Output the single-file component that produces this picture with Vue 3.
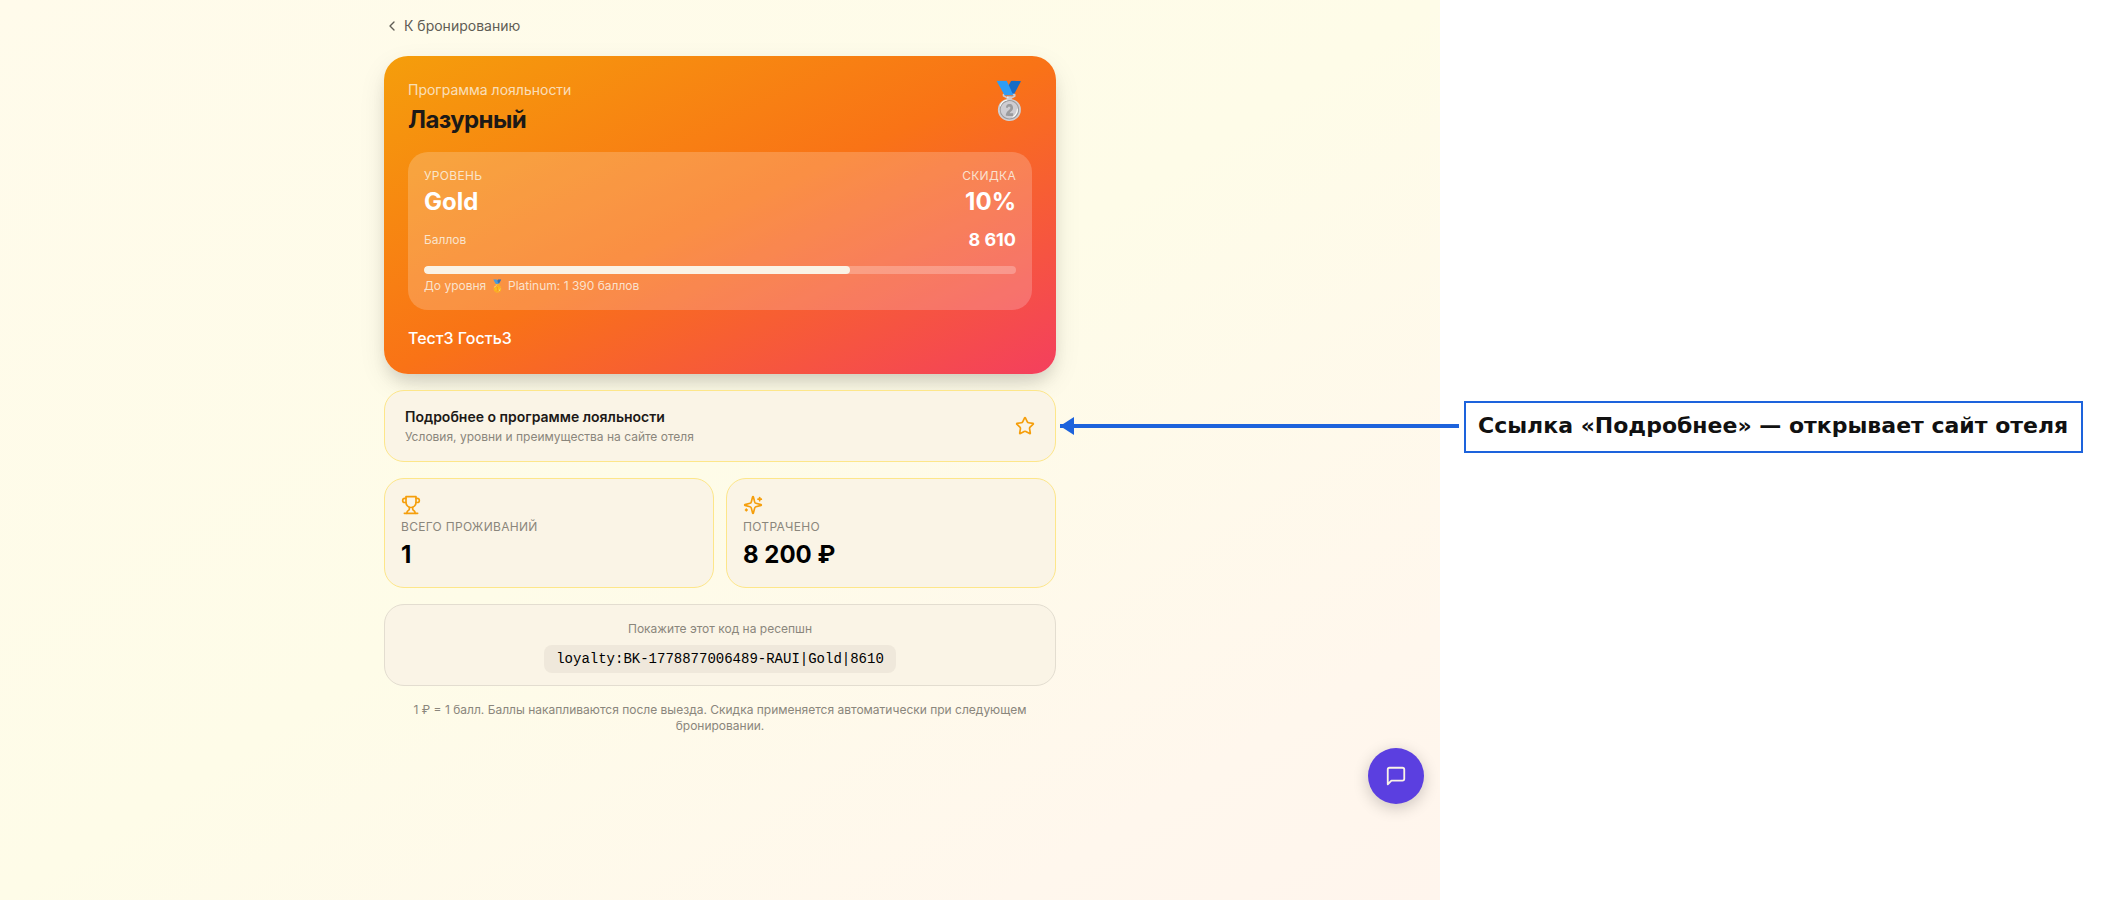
<script setup>
const guest = 'Тест3 Гость3'
const hotel = 'Лазурный'
const points = 8610
const nextPoints = 1390
const progress = (points / 12000) * 100 + 0.25
const format = (n) => n.toLocaleString('ru-RU')
</script>

<template>
  <div class="layout">
    <main class="app">
      <div class="content">
        <a class="back" href="#booking">
          <svg width="16" height="16" viewBox="0 0 24 24" class="icon"><path d="m15 18-6-6 6-6" /></svg>
          К бронированию
        </a>

        <section class="hero">
          <header class="hero-head">
            <div>
              <p class="program">Программа лояльности</p>
              <h1>{{ hotel }}</h1>
            </div>
            <span class="medal">🥈</span>
          </header>
          <div class="level">
            <div class="row">
              <div class="pair">
                <span class="caption upper">Уровень</span>
                <strong class="big">Gold</strong>
              </div>
              <div class="pair end">
                <span class="caption upper">Скидка</span>
                <strong class="big">10%</strong>
              </div>
            </div>
            <div class="row points">
              <span class="caption">Баллов</span>
              <strong class="count">{{ format(points) }}</strong>
            </div>
            <div class="track"><div class="fill" :style="{ width: progress + '%' }"></div></div>
            <p class="caption">До уровня 🥇 Platinum: {{ format(nextPoints) }} баллов</p>
          </div>
          <p class="guest">{{ guest }}</p>
        </section>

        <a class="card more" href="#loyalty">
          <span>
            <span class="more-title">Подробнее о программе лояльности</span>
            <span class="muted">Условия, уровни и преимущества на сайте отеля</span>
          </span>
          <svg width="20" height="20" viewBox="0 0 24 24" class="icon amber">
            <path d="M11.525 2.295a.53.53 0 0 1 .95 0l2.31 4.679a2.123 2.123 0 0 0 1.595 1.16l5.166.756a.53.53 0 0 1 .294.904l-3.736 3.638a2.123 2.123 0 0 0-.611 1.878l.882 5.14a.53.53 0 0 1-.771.56l-4.618-2.428a2.122 2.122 0 0 0-1.973 0L6.396 21.01a.53.53 0 0 1-.77-.56l.881-5.139a2.122 2.122 0 0 0-.611-1.879L2.16 9.795a.53.53 0 0 1 .294-.906l5.165-.755a2.122 2.122 0 0 0 1.597-1.16z" />
          </svg>
        </a>

        <div class="stats">
          <section class="card stat">
            <svg width="20" height="20" viewBox="0 0 24 24" class="icon amber">
              <path d="M6 9H4.500a2.500 2.500 0 0 1 0-5H6" /><path d="M18 9h1.500a2.500 2.500 0 0 0 0-5H18" /><path d="M4 22h16" />
              <path d="M10 14.660V17c0 .55-.47.98-.97 1.210C7.850 18.750 7 20.240 7 22" />
              <path d="M14 14.660V17c0 .55.47.98.97 1.210C16.150 18.750 17 20.240 17 22" /><path d="M18 2H6v7a6 6 0 0 0 12 0V2Z" />
            </svg>
            <span class="muted upper">Всего проживаний</span>
            <strong class="big">1</strong>
          </section>
          <section class="card stat">
            <svg width="20" height="20" viewBox="0 0 24 24" class="icon amber">
              <path d="M9.937 15.500A2 2 0 0 0 8.500 14.063l-6.135-1.582a.5.5 0 0 1 0-.962L8.500 9.936A2 2 0 0 0 9.937 8.500l1.582-6.135a.5.5 0 0 1 .963 0L14.063 8.500A2 2 0 0 0 15.500 9.937l6.135 1.581a.5.5 0 0 1 0 .964L15.500 14.063a2 2 0 0 0-1.437 1.437l-1.582 6.135a.5.5 0 0 1-.963 0z" />
              <path d="M20 3v4" /><path d="M22 5h-4" /><path d="M4 17v2" /><path d="M5 18H3" />
            </svg>
            <span class="muted upper">Потрачено</span>
            <strong class="big">8 200 ₽</strong>
          </section>
        </div>

        <section class="card code-card">
          <span class="muted">Покажите этот код на ресепшн</span>
          <code>loyalty:BK-1778877006489-RAUI|Gold|8610</code>
        </section>

        <p class="note muted">1 ₽ = 1 балл. Баллы накапливаются после выезда. Скидка применяется автоматически при следующем бронировании.</p>
      </div>

      <button class="chat" type="button" aria-label="Чат">
        <svg width="22" height="22" viewBox="0 0 24 24" class="icon"><path d="M21 15a2 2 0 0 1-2 2H7l-4 4V5a2 2 0 0 1 2-2h14a2 2 0 0 1 2 2z" /></svg>
      </button>
    </main>

    <aside class="notes">
      <div class="callout">
        Ссылка «Подробнее» — открывает сайт отеля
        <span class="arrow"></span>
      </div>
    </aside>
  </div>
</template>

<style>
body {
  margin: 0;
  background: #fff;
}
</style>

<style scoped>
* {
  box-sizing: border-box;
}
p,
h1 {
  margin: 0;
}
.layout {
  display: grid;
  grid-template-columns: minmax(0, 1fr) 666px;
  min-height: 100vh;
  font-family: Inter, sans-serif;
  font-size: 14px;
  line-height: 20px;
}
.app {
  position: relative;
  padding: 16px;
  background: linear-gradient(to bottom right, #fffbeb, #fefce8 50%, #fff7ed 85%, #fff5ed);
  color: #1c1917;
}
.content {
  max-width: 672px;
  margin: 0 auto;
  display: flex;
  flex-direction: column;
  gap: 16px;
}
.icon {
  display: block;
  flex: none;
  fill: none;
  stroke: currentColor;
  stroke-width: 2;
  stroke-linecap: round;
  stroke-linejoin: round;
}
.amber {
  color: #f59e0b;
}
.back {
  display: flex;
  align-items: center;
  gap: 4px;
  align-self: flex-start;
  margin-bottom: 4px;
  color: #5f5d55;
  text-decoration: none;
}
.hero {
  padding: 24px;
  border-radius: 24px;
  background: linear-gradient(to bottom right, #f59e0b, #f97316, #f43f5e);
  box-shadow: 0 10px 15px -3px rgba(0, 0, 0, 0.1), 0 10px 30px -4px rgba(0, 0, 0, 0.12);
  color: #faf3e6;
}
.hero-head {
  display: flex;
  justify-content: space-between;
  align-items: flex-start;
}
.program {
  color: rgba(250, 243, 230, 0.8);
}
h1 {
  margin-top: 4px;
  font-size: 24px;
  line-height: 32px;
  font-weight: 700;
  letter-spacing: -0.025em;
  color: #1c1917;
}
.medal {
  font-size: 36px;
  line-height: 40px;
}
.level {
  margin: 16px 0;
  padding: 16px;
  border-radius: 20px;
  background: rgba(255, 255, 255, 0.2);
}
.row {
  display: flex;
  justify-content: space-between;
  align-items: center;
}
.pair {
  display: flex;
  flex-direction: column;
  gap: 2px;
}
.end {
  align-items: flex-end;
}
.caption {
  font-size: 12px;
  line-height: 16px;
  color: rgba(250, 243, 230, 0.85);
}
.upper {
  text-transform: uppercase;
  letter-spacing: 0.025em;
}
.big {
  font-size: 24px;
  line-height: 32px;
  font-weight: 700;
}
.level strong {
  color: #fff;
}
.points {
  margin-top: 8px;
}
.count {
  font-size: 18px;
  line-height: 28px;
  font-weight: 700;
}
.track {
  height: 8px;
  margin: 12px 0 4px;
  border-radius: 4px;
  background: rgba(255, 255, 255, 0.25);
  overflow: hidden;
}
.fill {
  height: 100%;
  border-radius: 4px;
  background: #faf3e6;
}
.guest {
  font-size: 16px;
  line-height: 24px;
  font-weight: 500;
  color: #fff;
}
.card {
  border: 1px solid #fde68a;
  border-radius: 20px;
  background: #faf4e6;
}
.more {
  display: flex;
  align-items: center;
  justify-content: space-between;
  padding: 16px 20px;
  color: inherit;
  text-decoration: none;
}
.more-title {
  display: block;
  margin-bottom: 2px;
  font-weight: 600;
}
.muted {
  display: block;
  font-size: 12px;
  line-height: 16px;
  color: #8a867c;
}
.stats {
  display: grid;
  grid-template-columns: 1fr 1fr;
  gap: 12px;
}
.stat {
  display: flex;
  flex-direction: column;
  gap: 4px;
  padding: 16px;
  color: #000;
}
.code-card {
  display: flex;
  flex-direction: column;
  align-items: center;
  gap: 8px;
  padding: 16px 16px 12px;
  border-color: #e3ddd0;
}
code {
  padding: 4px 12px;
  border-radius: 8px;
  background: #efe8db;
  color: #000;
  font-family: "Liberation Mono", monospace;
  font-size: 14px;
}
.note {
  padding: 0 16px;
  text-align: center;
}
.chat {
  position: absolute;
  right: 16px;
  bottom: 96px;
  display: grid;
  place-items: center;
  width: 56px;
  height: 56px;
  padding: 0;
  border: 0;
  border-radius: 50%;
  background: #5b3fe0;
  color: #faf3e6;
  box-shadow: 0 4px 16px rgba(0, 0, 0, 0.2);
}
.notes {
  padding: 401px 23px 0 24px;
}
.callout {
  position: relative;
  padding: 9px 12px 11px;
  border: 2px solid #1d63dc;
  color: #111;
  font: bold 22px/28px "DejaVu Sans", sans-serif;
  white-space: nowrap;
}
.arrow {
  position: absolute;
  top: 21px;
  right: 100%;
  width: calc((100vw - 1338px) / 2 + 15px);
  height: 4px;
  margin-right: 7px;
  background: #1d63dc;
}
.arrow::before {
  content: "";
  position: absolute;
  left: 0;
  top: -7px;
  border: solid transparent;
  border-width: 9px 14px 9px 0;
  border-right-color: #1d63dc;
}
</style>
